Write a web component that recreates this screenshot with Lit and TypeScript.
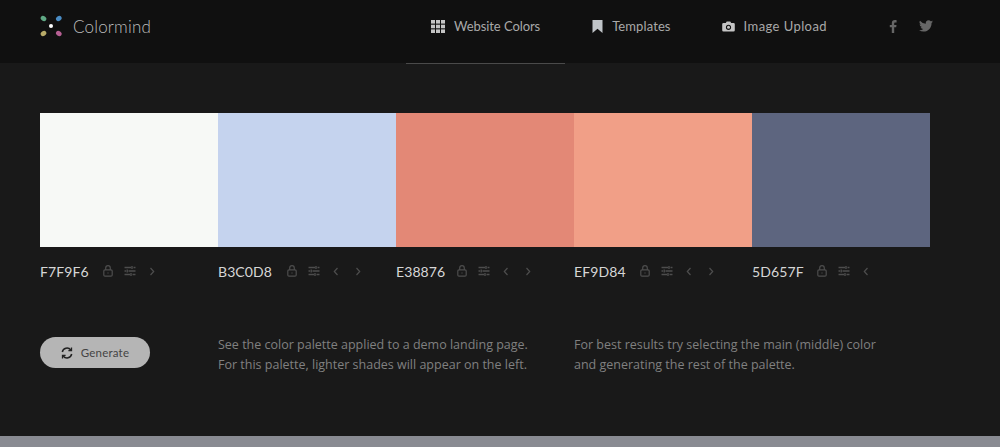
import { LitElement, html, css, svg } from "lit";
import { customElement } from "lit/decorators.js";

const lock = svg`<svg class="ic" width="12" height="12" viewBox="0 0 12 12" fill="none" stroke="currentColor" stroke-width="1.2"><rect x="1.800" y="4.900" width="8.400" height="6.300" rx="1.200"/><path d="M3.700 4.900V3a2.300 2.300 0 0 1 4.600 0v1.900"/><path d="M6 7.400v1.200"/></svg>`;
const sliders = svg`<svg class="ic" width="12" height="12" viewBox="0 0 12 12" fill="none" stroke="currentColor" stroke-width="1.4"><path d="M0.500 2.500h6.500M9.500 2.500h2M0.500 6h1.500M4.500 6h7M0.500 9.500h5.500M8.500 9.500h3M8 1v3M3.200 4.500v3M7 8v3"/></svg>`;
const left = svg`<svg class="ic" width="6" height="9" viewBox="0 0 6 9" fill="none" stroke="currentColor" stroke-width="1.200"><path d="M4.500 1L1.300 4.500 4.500 8"/></svg>`;
const right = svg`<svg class="ic" width="6" height="9" viewBox="0 0 6 9" fill="none" stroke="currentColor" stroke-width="1.200"><path d="M1.500 1L4.700 4.500 1.500 8"/></svg>`;

const colors = [
  { hex: "F7F9F6", bg: "#f7f9f6", w: 49, l: false, r: true },
  { hex: "B3C0D8", bg: "#c5d3ee", w: 55, l: true, r: true },
  { hex: "E38876", bg: "#e38876", w: 47, l: true, r: true },
  { hex: "EF9D84", bg: "#f19f87", w: 52, l: true, r: true },
  { hex: "5D657F", bg: "#5d657f", w: 51, l: true, r: false },
];

@customElement("app-root")
export class AppRoot extends LitElement {
  static styles = css`
    :host { display: block; height: 447px; background: #191919; overflow: hidden; position: relative; font-family: "Lato", "Noto Sans", sans-serif; }
    header { height: 63px; background: #101010; display: flex; align-items: stretch; padding-left: 39px; }
    .logo { display: flex; align-items: center; gap: 10px; height: 52px; color: #bdbdbd; font-size: 17px; letter-spacing: 0.2px; font-weight: 300; }
    nav { margin-left: auto; display: flex; padding-right: 67px; }
    .item { display: flex; align-items: center; height: 52px; padding: 0 25px; color: #a9a9a9; font-size: 13px; white-space: nowrap; }
    .item svg { margin-right: 9px; }
    .item.active { position: relative; padding-right: 27px; letter-spacing: -0.07px; }
    .item.active::after { content: ""; position: absolute; left: 0; right: 2px; top: 63px; height: 1px; background: #4a4a4a; }
    .item.tpl { padding-right: 26px; letter-spacing: 0.1px; }
    .item.img { letter-spacing: 0.42px; }
    .social { display: flex; align-items: center; height: 52px; gap: 22px; margin-left: 37px; color: #666; }
    main { padding: 50px 0 0 40px; }
    .palette { display: flex; width: 890px; height: 134px; }
    .swatch { flex: 0 0 178px; }
    .labels { display: flex; width: 890px; margin-top: 13px; height: 22px; }
    .label { flex: 0 0 178px; display: flex; align-items: center; color: #d6d6d6; font-size: 14px; letter-spacing: 0.1px; }
    .hex { white-space: nowrap; margin-right: 13px; }
    .tools { display: flex; align-items: center; color: #4d4d4d; }
    .tools .ic { display: block; }
    .t1 { width: 22px; }
    .t2 { width: 25px; }
    .t3 { width: 22px; }
    .bottom { display: flex; margin-top: 53px; width: 890px; }
    .btn-col { flex: 0 0 178px; padding-top: 2px; }
    .btn { display: inline-flex; align-items: center; justify-content: center; gap: 8px; width: 110px; height: 31px; border-radius: 16px; background: #b5b5b5; color: #444; font-size: 11.500px; letter-spacing: 0.2px; }
    .txt { flex: 0 0 356px; color: #808080; font-family: "Open Sans", sans-serif; font-size: 12.500px; line-height: 20px; }
    .foot { position: absolute; left: 0; right: 0; bottom: 0; height: 11px; background: #898b92; }
  `;

  render() {
    return html`
      <header>
        <div class="logo">
          <svg width="24" height="24" viewBox="0 0 24 24">
            <g transform="translate(12 12)">
              <ellipse cx="-7.500" cy="-7.500" rx="3" ry="2.400" transform="rotate(35 -7.500 -7.500)" fill="#5fa884"/>
              <ellipse cx="7.800" cy="-7.500" rx="3" ry="2.400" transform="rotate(-35 7.800 -7.500)" fill="#4a8cc4"/>
              <ellipse cx="-7.500" cy="7.500" rx="3" ry="2.400" transform="rotate(-35 -7.500 7.500)" fill="#b8ab68"/>
              <ellipse cx="7.800" cy="7.500" rx="3" ry="2.400" transform="rotate(35 7.800 7.500)" fill="#b65f93"/>
              <circle r="2" fill="#fff"/>
            </g>
          </svg>
          <span>Colormind</span>
        </div>
        <nav>
          <div class="item active">
            <svg width="14" height="13" viewBox="0 0 14 13" fill="#c4c4c4"><rect width="4" height="3.600"/><rect x="5" width="4" height="3.600"/><rect x="10" width="4" height="3.600"/><rect y="4.700" width="4" height="3.600"/><rect x="5" y="4.700" width="4" height="3.600"/><rect x="10" y="4.700" width="4" height="3.600"/><rect y="9.400" width="4" height="3.600"/><rect x="5" y="9.400" width="4" height="3.600"/><rect x="10" y="9.400" width="4" height="3.600"/></svg>
            <span>Website Colors</span>
          </div>
          <div class="item tpl">
            <svg width="11" height="13" viewBox="0 0 11 13" fill="#c0c4c8"><path d="M0.500 0h10v13L5.500 8.800 0.500 13z"/></svg>
            <span>Templates</span>
          </div>
          <div class="item img">
            <svg width="13" height="11" viewBox="0 0 13 11"><path fill="#c4c4c4" fill-rule="evenodd" d="M1.500 2h2.300l.9-1.600h3.600L9.200 2h2.300A1.300 1.300 0 0 1 12.800 3.300v6A1.300 1.300 0 0 1 11.500 10.600h-10A1.300 1.300 0 0 1 .2 9.300v-6A1.300 1.300 0 0 1 1.500 2zM6.500 3.700a2.600 2.600 0 1 0 0 5.200 2.600 2.600 0 0 0 0-5.200z"/><circle cx="6.500" cy="6.300" r="1.500" fill="#c4c4c4"/></svg>
            <span>Image Upload</span>
          </div>
          <div class="social">
            <svg width="8" height="13" viewBox="0 0 8 13" fill="currentColor"><path d="M5.200 13V7.200h2l.3-2.300H5.200V3.500c0-.7.200-1.100 1.100-1.100h1.300V.3C7.300.2 6.600.1 5.800.1 4 .1 2.800 1.200 2.800 3.200v1.700H.8v2.300h2V13z"/></svg>
            <svg width="14" height="12" viewBox="0 0 24 20" fill="currentColor"><path d="M24 2.400a9.800 9.800 0 0 1-2.800.8A4.900 4.900 0 0 0 23.300.5a9.800 9.800 0 0 1-3.100 1.200 4.900 4.900 0 0 0-8.400 4.500A14 14 0 0 1 1.700.9a4.900 4.900 0 0 0 1.500 6.600 4.900 4.900 0 0 1-2.200-.6v.1a4.900 4.900 0 0 0 3.900 4.800 4.900 4.900 0 0 1-2.200.1 4.900 4.900 0 0 0 4.600 3.400A9.900 9.900 0 0 1 0 17.300 14 14 0 0 0 7.500 19.500c9.100 0 14-7.500 14-14v-.6A10 10 0 0 0 24 2.400z"/></svg>
          </div>
        </nav>
      </header>
      <main>
        <div class="palette">
          ${colors.map((c) => html`<div class="swatch" style="background:${c.bg}"></div>`)}
        </div>
        <div class="labels">
          ${colors.map(
            (c) => html`<div class="label">
              <span class="hex" style="width:${c.w}px">${c.hex}</span>
              <div class="tools">
                <span class="t1">${lock}</span>
                <span class="t2">${sliders}</span>
                ${c.l ? html`<span class="t3">${left}</span>` : ""}
                ${c.r ? html`<span>${right}</span>` : ""}
              </div>
            </div>`
          )}
        </div>
        <div class="bottom">
          <div class="btn-col">
            <div class="btn">
              <svg width="12" height="12" viewBox="0 0 12 12" fill="none" stroke="#222" stroke-width="1.500"><path d="M1.300 5A4.800 4.800 0 0 1 9.800 3"/><path d="M10.700 7A4.800 4.800 0 0 1 2.200 9"/><path d="M10.500 .6v3.100H7.400M1.500 11.400V8.300h3.100" stroke-width="1.300"/></svg>
              <span>Generate</span>
            </div>
          </div>
          <div class="txt">See the color palette applied to a demo landing page.<br />For this palette, lighter shades will appear on the left.</div>
          <div class="txt">For best results try selecting the main (middle) color<br />and generating the rest of the palette.</div>
        </div>
      </main>
      <div class="foot"></div>
    `;
  }
}
